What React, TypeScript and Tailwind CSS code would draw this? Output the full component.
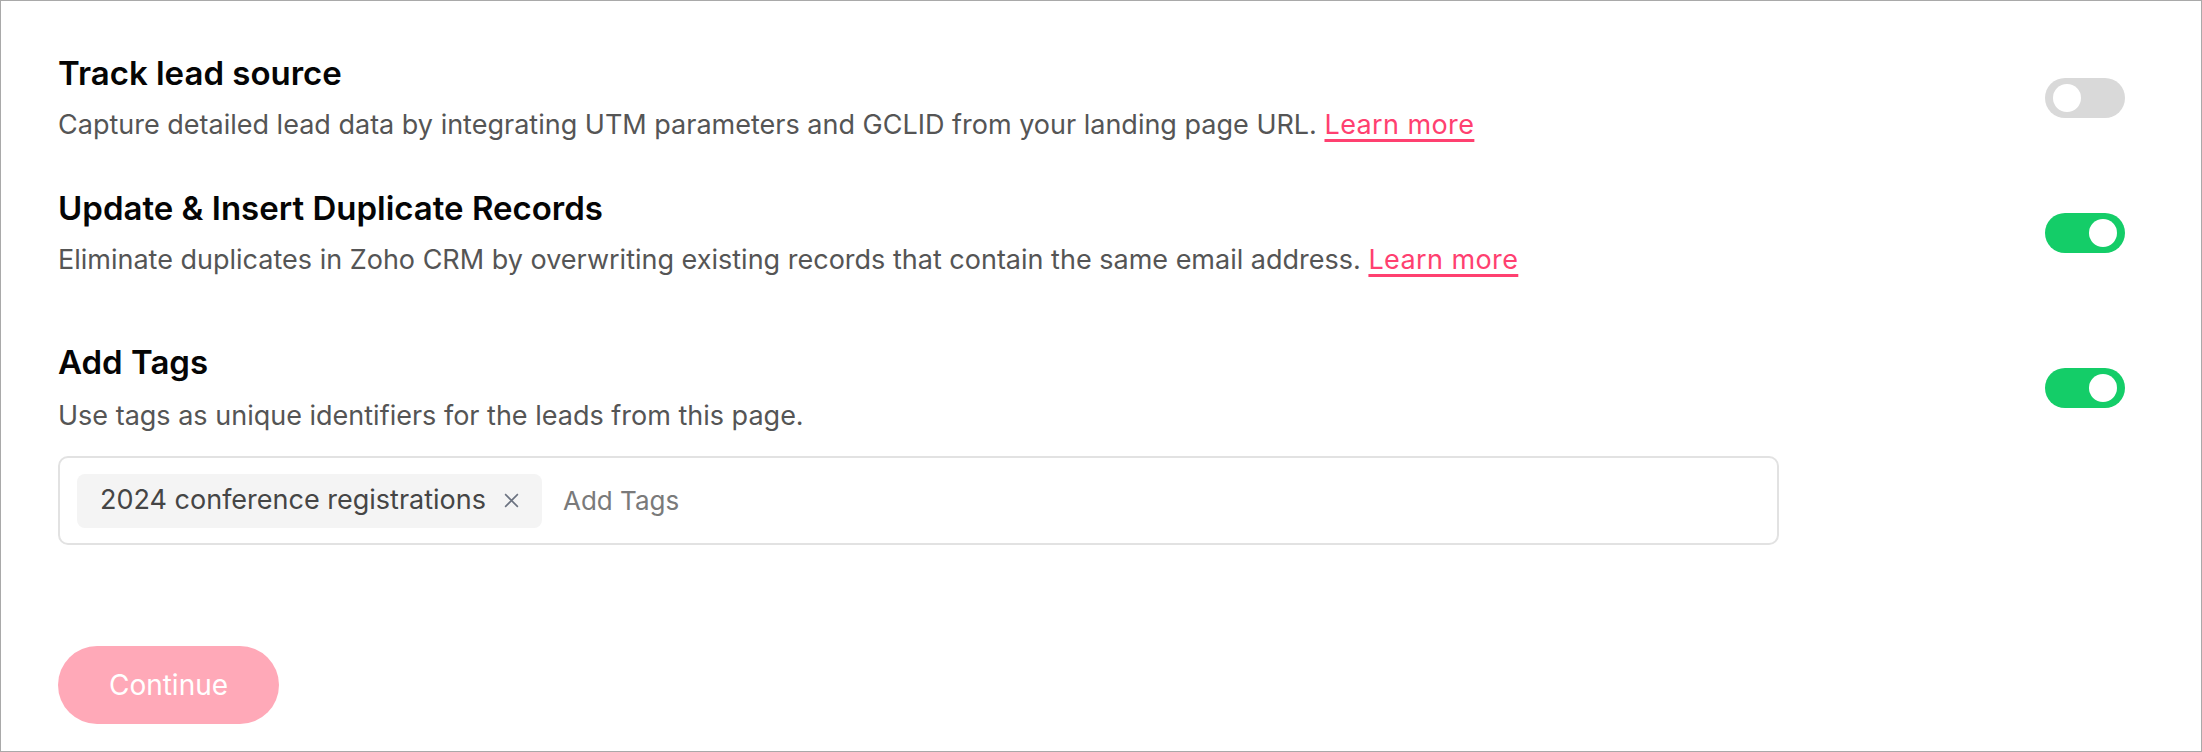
import React from 'react';

const font = { fontFamily: 'Inter, "Noto Sans", sans-serif' };

function Toggle({ on }: { on: boolean }) {
  return (
    <div
      className={`flex h-[40px] w-[80px] shrink-0 items-center rounded-full px-[8px] ${
        on ? 'justify-end bg-[#14cd68]' : 'justify-start bg-[#d9d9d9]'
      }`}
    >
      <div className="h-[28px] w-[28px] rounded-full bg-white" />
    </div>
  );
}

function LearnMore() {
  return (
    <a
      className="tracking-[0.4px] text-[#ff4070] underline decoration-[3px] underline-offset-[5px]"
      href="#"
    >
      Learn more
    </a>
  );
}

export default function App() {
  return (
    <div
      style={font}
      className="flex h-[752px] w-full flex-col border border-[#a9a9a9] bg-white pl-[57px] pr-[76px] pt-[52px]"
    >
      {/* Track lead source */}
      <div className="flex items-center justify-between">
        <div>
          <h2 className="text-[33px] font-semibold leading-[40px] text-[#050505]">Track lead source</h2>
          <p className="mt-[14px] text-[27px] leading-[36px] text-[#555555]">
            Capture detailed lead data by integrating UTM parameters and GCLID from your landing page URL.{' '}
            <LearnMore />
          </p>
        </div>
        <Toggle on={false} />
      </div>

      {/* Duplicates */}
      <div className="mt-[45px] flex items-center justify-between">
        <div>
          <h2 className="text-[33px] font-semibold leading-[40px] text-[#050505]">
            Update &amp; Insert Duplicate Records
          </h2>
          <p className="mt-[14px] text-[27px] leading-[36px] text-[#555555]">
            Eliminate duplicates in Zoho CRM by overwriting existing records that contain the same email address.{' '}
            <LearnMore />
          </p>
        </div>
        <Toggle on={true} />
      </div>

      {/* Tags */}
      <div className="mt-[64px] flex items-center justify-between">
        <div>
          <h2 className="text-[33px] font-semibold leading-[40px] text-[#050505]">Add Tags</h2>
          <p className="mt-[16px] text-[27px] leading-[36px] text-[#555555]">
            Use tags as unique identifiers for the leads from this page.
          </p>
        </div>
        <Toggle on={true} />
      </div>

      <div className="mt-[22px] flex h-[89px] w-[1721px] items-center gap-[21px] rounded-[10px] border-2 border-[#e2e2e2] pl-[17px]">
        <span className="flex h-[54px] items-center gap-[17px] rounded-[8px] bg-[#f4f4f4] pl-[23px] pr-[22px] text-[27px] text-[#454545]">
          2024 conference registrations
          <svg width="17" height="17" viewBox="0 0 16 16" fill="none" stroke="#6b7280" strokeWidth="1.5">
            <path d="M2 2l12 12M14 2L2 14" />
          </svg>
        </span>
        <span className="text-[26px] text-[#7a7a7a]">Add Tags</span>
      </div>

      <button className="mt-[101px] flex h-[78px] w-[221px] items-center justify-center rounded-full bg-[#ffa9b8] text-[28px] text-white">
        Continue
      </button>
    </div>
  );
}
